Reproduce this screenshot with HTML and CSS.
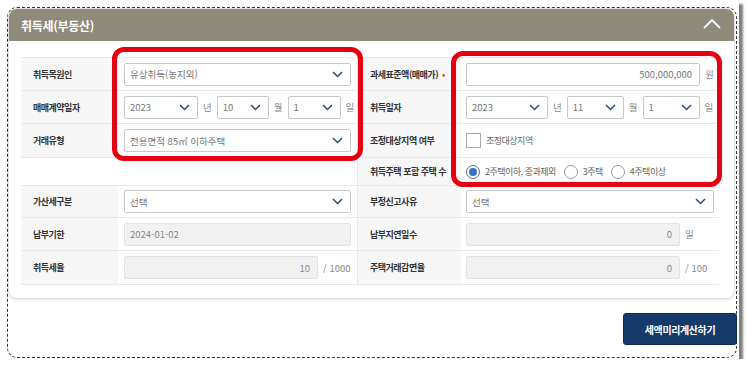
FILE: index.html
```html
<!DOCTYPE html>
<html lang="ko">
<head>
    <meta charset="UTF-8">
    <title>취득세(부동산)</title>
    <link rel="stylesheet" href="styles.css">
</head>
<body>
<div class="shot">
    <div class="frame">
        <div class="card">
            <div class="card-head">
                <h2>취득세(부동산)</h2>
                <svg class="fold" width="20" height="12" viewBox="0 0 20 12"><path d="M2 10 L10 2 L18 10" fill="none" stroke="#fff" stroke-width="1.8"/></svg>
            </div>
            <div class="card-body">
                <div class="grid">
                    <!-- row 1 -->
                    <div class="lbl">취득목원인</div>
                    <div class="val">
                        <div class="sel w-full"><span>유상취득(농지외)</span><svg width="11" height="7" viewBox="0 0 11 7"><path d="M1 1 L5.5 5.5 L10 1" fill="none" stroke="#2d4b78" stroke-width="1.5"/></svg></div>
                    </div>
                    <div class="lbl">과세표준액(매매가) <i class="req">•</i></div>
                    <div class="val">
                        <div class="inp w-price">500,000,000</div><span class="unit">원</span>
                    </div>

                    <!-- row 2 -->
                    <div class="lbl">매매계약일자</div>
                    <div class="val">
                        <div class="sel w-y1"><span>2023</span><svg width="11" height="7" viewBox="0 0 11 7"><path d="M1 1 L5.5 5.5 L10 1" fill="none" stroke="#2d4b78" stroke-width="1.5"/></svg></div><span class="unit">년</span>
                        <div class="sel w-m1"><span>10</span><svg width="11" height="7" viewBox="0 0 11 7"><path d="M1 1 L5.5 5.5 L10 1" fill="none" stroke="#2d4b78" stroke-width="1.5"/></svg></div><span class="unit">월</span>
                        <div class="sel w-d1"><span>1</span><svg width="11" height="7" viewBox="0 0 11 7"><path d="M1 1 L5.5 5.5 L10 1" fill="none" stroke="#2d4b78" stroke-width="1.5"/></svg></div><span class="unit">일</span>
                    </div>
                    <div class="lbl">취득일자</div>
                    <div class="val">
                        <div class="sel w-y2"><span>2023</span><svg width="11" height="7" viewBox="0 0 11 7"><path d="M1 1 L5.5 5.5 L10 1" fill="none" stroke="#2d4b78" stroke-width="1.5"/></svg></div><span class="unit">년</span>
                        <div class="sel w-m2"><span>11</span><svg width="11" height="7" viewBox="0 0 11 7"><path d="M1 1 L5.5 5.5 L10 1" fill="none" stroke="#2d4b78" stroke-width="1.5"/></svg></div><span class="unit">월</span>
                        <div class="sel w-m2"><span>1</span><svg width="11" height="7" viewBox="0 0 11 7"><path d="M1 1 L5.5 5.5 L10 1" fill="none" stroke="#2d4b78" stroke-width="1.5"/></svg></div><span class="unit">일</span>
                    </div>

                    <!-- row 3 -->
                    <div class="lbl">거래유형</div>
                    <div class="val">
                        <div class="sel w-full"><span>전용면적 85㎡ 이하주택</span><svg width="11" height="7" viewBox="0 0 11 7"><path d="M1 1 L5.5 5.5 L10 1" fill="none" stroke="#2d4b78" stroke-width="1.5"/></svg></div>
                    </div>
                    <div class="lbl">조정대상지역 여부</div>
                    <div class="val">
                        <span class="chk"></span><span class="opt">조정대상지역</span>
                    </div>

                    <!-- row 4 -->
                    <div class="blank"></div>
                    <div class="blank"></div>
                    <div class="lbl">취득주택 포함 주택 수</div>
                    <div class="val">
                        <span class="radio on"></span><span class="opt">2주택이하, 중과제외</span>
                        <span class="radio"></span><span class="opt">3주택</span>
                        <span class="radio"></span><span class="opt">4주택이상</span>
                    </div>

                    <!-- row 5 -->
                    <div class="lbl">가산세구분</div>
                    <div class="val">
                        <div class="sel w-full"><span>선택</span><svg width="11" height="7" viewBox="0 0 11 7"><path d="M1 1 L5.5 5.5 L10 1" fill="none" stroke="#2d4b78" stroke-width="1.5"/></svg></div>
                    </div>
                    <div class="lbl">부정신고사유</div>
                    <div class="val">
                        <div class="sel w-full"><span>선택</span><svg width="11" height="7" viewBox="0 0 11 7"><path d="M1 1 L5.5 5.5 L10 1" fill="none" stroke="#2d4b78" stroke-width="1.5"/></svg></div>
                    </div>

                    <!-- row 6 -->
                    <div class="lbl">납부기한</div>
                    <div class="val">
                        <div class="inp off left w-full">2024-01-02</div>
                    </div>
                    <div class="lbl">납부지연일수</div>
                    <div class="val">
                        <div class="inp off w-late">0</div><span class="unit">일</span>
                    </div>

                    <!-- row 7 -->
                    <div class="lbl">취득세율</div>
                    <div class="val">
                        <div class="inp off w-rate">10</div><span class="unit">/ 1000</span>
                    </div>
                    <div class="lbl">주택거래감면율</div>
                    <div class="val">
                        <div class="inp off w-late">0</div><span class="unit">/ 100</span>
                    </div>
                </div>
            </div>
        </div>
        <div class="actions">
            <button class="btn-calc">세액미리계산하기</button>
        </div>
    </div>

    <div class="mark mark-left"></div>
    <div class="mark mark-right"></div>
</div>
</body>
</html>
```

FILE: styles.css
```css
body {
    margin: 0;
    background: #fff;
    font-family: "Noto Sans CJK KR", "Noto Sans", sans-serif;
}
.shot {
    position: relative;
    width: 739px;
    height: 359px;
    background: #fff;
    box-shadow: 4px 4px 2px rgba(0, 0, 0, 0.5);
    box-sizing: border-box;
    padding: 7px 0 0 7px;
}
.frame {
    width: 730px;
    height: 351px;
    box-sizing: border-box;
    border: 1px dashed #333;
    border-radius: 10px;
}
.card {
    width: 727px;
    height: 291px;
    box-sizing: border-box;
    border: 1px solid #e2e2e2;
    border-radius: 9px;
    background: #fff;
    box-shadow: 0 2px 3px rgba(0, 0, 0, 0.08);
    overflow: hidden;
}
.card-head {
    height: 32px;
    background: #8e8b7b;
    display: flex;
    align-items: center;
    justify-content: space-between;
    padding: 0 12px 0 12px;
}
.card-head h2 {
    margin: 0;
    color: #fff;
    font-size: 12px;
    font-weight: 700;
    letter-spacing: -0.3px;
}
.fold {
    margin-top: -2px;
}
.card-body {
    padding: 16px 14px 0 12px;
}
.grid {
    display: grid;
    grid-template-columns: 97px 239px 104px 258px;
    grid-template-rows: 33px 33px 34px 28px 32px 33px 34px;
    border-top: 1px solid #e8e8e8;
}
.grid > div {
    border-bottom: 1px solid #e8e8e8;
    box-sizing: border-box;
}
.lbl {
    background: #f7f7f7;
    display: flex;
    align-items: center;
    padding-left: 12px;
    font-size: 9px;
    font-weight: 700;
    color: #333;
    letter-spacing: -0.5px;
    white-space: nowrap;
}
.grid > .lbl:nth-child(4n+3),
.grid > .blank:nth-child(4n+3) {
    border-left: 1px solid #e8e8e8;
}
.req {
    font-style: normal;
    color: #e2572a;
    margin-left: 4px;
}
.val {
    display: flex;
    align-items: center;
    padding-left: 6px;
    gap: 5px;
    font-size: 9px;
    color: #777;
}
.grid > .val:nth-child(4n) {
    padding-left: 5px;
}
.sel, .inp {
    height: 23px;
    box-sizing: border-box;
    border: 1px solid #c9c9c9;
    border-radius: 2px;
    background: #fff;
    display: flex;
    align-items: center;
    padding: 0 7px 0 5px;
    font-size: 9.5px;
    color: #777;
    white-space: nowrap;
}
.sel {
    justify-content: space-between;
}
.inp {
    justify-content: flex-end;
}
.inp.left {
    justify-content: flex-start;
}
.inp.off {
    background: #f1f1f1;
    border-color: #e3e3e3;
    color: #888;
}
.w-full { width: 227px; }
.grid > .val:nth-child(4n) .w-full { width: 248px; }
.w-price { width: 234px; }
.w-late { width: 214px; }
.w-rate { width: 194px; }
.w-y1 { width: 74px; }
.w-m1 { width: 52px; }
.w-d1 { width: 53px; }
.w-y2 { width: 82px; }
.w-m2 { width: 57px; }
.unit {
    font-size: 9.5px;
    color: #888;
    white-space: nowrap;
}
.chk {
    width: 15px;
    height: 15px;
    box-sizing: border-box;
    border: 1px solid #aaa;
    background: #fff;
}
.opt {
    font-size: 9px;
    color: #666;
    margin-right: 3px;
    letter-spacing: -0.5px;
}
.radio {
    width: 14px;
    height: 14px;
    box-sizing: border-box;
    border: 1px solid #9a9a9a;
    border-radius: 50%;
    background: #fff;
    display: flex;
    align-items: center;
    justify-content: center;
}
.radio.on {
    border-color: #4d6d98;
}
.radio.on::after {
    content: "";
    width: 8px;
    height: 8px;
    border-radius: 50%;
    background: #3a6fc4;
}
.actions {
    display: flex;
    justify-content: flex-end;
    padding: 14px 0 0 0;
}
.btn-calc {
    width: 114px;
    height: 32px;
    background: #163a6a;
    border: 1px solid #0d2a52;
    border-radius: 3px;
    color: #fff;
    font-family: "Noto Sans CJK KR", "Noto Sans", sans-serif;
    font-size: 10px;
    font-weight: 700;
    letter-spacing: -0.4px;
    margin-right: -1px;
}
.mark {
    position: absolute;
    border: 5px solid #e60012;
    border-radius: 12px;
    box-sizing: border-box;
}
.mark-left {
    left: 112px;
    top: 47px;
    width: 251px;
    height: 114px;
}
.mark-right {
    left: 451px;
    top: 51px;
    width: 271px;
    height: 136px;
}
```
